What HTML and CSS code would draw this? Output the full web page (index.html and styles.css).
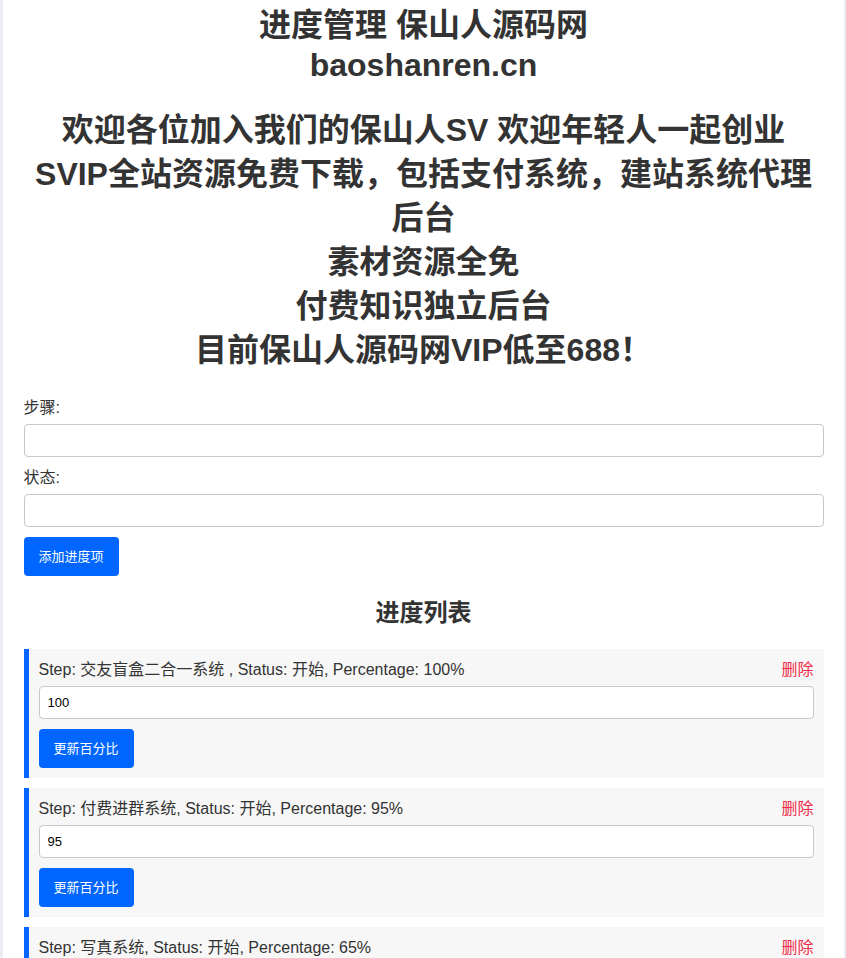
FILE: index.html
```html
<!DOCTYPE html>
<html lang="zh-CN">
<head>
<meta charset="utf-8">
<title>进度管理</title>
<link rel="stylesheet" href="styles.css">
</head>
<body>
<div class="container">
  <h1 class="title">进度管理 保山人源码网<br>baoshanren.cn</h1>
  <h1 class="promo">欢迎各位加入我们的保山人SV 欢迎年轻人一起创业<br>SVIP全站资源免费下载，包括支付系统，建站系统代理后台<br>素材资源全免<br>付费知识独立后台<br>目前保山人源码网VIP低至688！</h1>
  <form class="form">
    <label class="label" for="step">步骤:</label>
    <input class="input" id="step" type="text">
    <label class="label" for="status">状态:</label>
    <input class="input" id="status" type="text">
    <button class="btn" type="button">添加进度项</button>
  </form>
  <h2 class="list-title">进度列表</h2>
  <ul class="list">
    <li class="item">
      <div class="item-head"><span>Step: 交友盲盒二合一系统 , Status: 开始, Percentage: 100%</span><a class="del">删除</a></div>
      <input class="input item-input" type="text" value="100">
      <button class="btn" type="button">更新百分比</button>
    </li>
    <li class="item">
      <div class="item-head"><span>Step: 付费进群系统, Status: 开始, Percentage: 95%</span><a class="del">删除</a></div>
      <input class="input item-input" type="text" value="95">
      <button class="btn" type="button">更新百分比</button>
    </li>
    <li class="item">
      <div class="item-head"><span>Step: 写真系统, Status: 开始, Percentage: 65%</span><a class="del">删除</a></div>
      <input class="input item-input" type="text" value="65">
      <button class="btn" type="button">更新百分比</button>
    </li>
  </ul>
</div>
</body>
</html>
```
FILE: styles.css
```css
html, body {
  margin: 0;
  padding: 0;
}
body {
  background: #ecedf2;
  font-family: "Liberation Sans", "Noto Sans CJK SC", sans-serif;
  color: #333;
}
.container {
  max-width: 800px;
  margin: 0 auto;
  padding: 5px 20px 20px 21px;
  background: #fff;
  min-height: 958px;
  box-sizing: content-box;
}
.title {
  margin: 0;
  font-size: 32px;
  line-height: 40px;
  text-align: center;
  font-weight: bold;
}
.promo {
  margin: 23px 0 25px;
  font-size: 32px;
  line-height: 44px;
  text-align: center;
  font-weight: bold;
}
.form {
  display: flex;
  flex-direction: column;
  align-items: flex-start;
}
.label {
  font-size: 16px;
  line-height: 21px;
  margin-bottom: 6px;
}
.input {
  width: 100%;
  height: 33px;
  box-sizing: border-box;
  border: 1px solid #c8c8c8;
  border-radius: 4px;
  padding: 0 8px;
  font-family: "Liberation Sans", "Noto Sans CJK SC", sans-serif;
  font-size: 13px;
  color: #000;
  background: #fff;
  margin: 0 0 10px;
}
.btn {
  background: #0066ff;
  color: #fff;
  border: none;
  border-radius: 4px;
  padding: 10px 15px;
  font-family: "Liberation Sans", "Noto Sans CJK SC", sans-serif;
  font-size: 13px;
  line-height: 19px;
  cursor: pointer;
}
.list-title {
  margin: 20px 0 19px;
  font-size: 24px;
  line-height: 34px;
  text-align: center;
  font-weight: bold;
}
.list {
  list-style: none;
  margin: 0;
  padding: 0;
  display: flex;
  flex-direction: column;
  gap: 10px;
}
.item {
  background: #f7f7f7;
  border-left: 5px solid #0066ff;
  padding: 10px;
  display: flex;
  flex-direction: column;
  align-items: flex-start;
}
.item-head {
  width: 100%;
  display: flex;
  justify-content: space-between;
  font-size: 16px;
  line-height: 22px;
  margin-bottom: 5px;
}
.del {
  color: #ee2d4c;
  cursor: pointer;
}
.item-input {
  margin-bottom: 10px;
}
```
